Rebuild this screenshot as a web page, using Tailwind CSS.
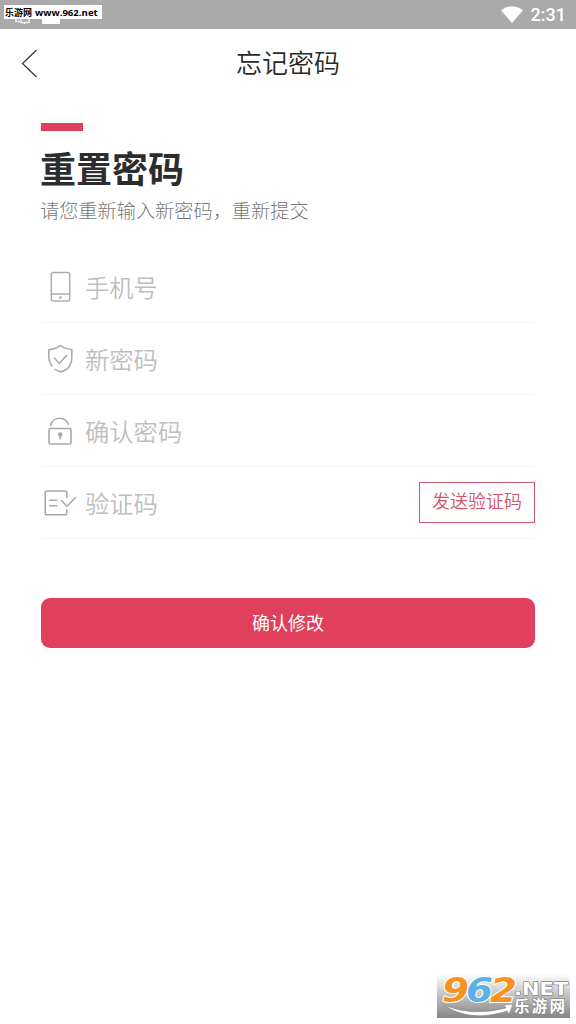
<!DOCTYPE html>
<html lang="zh-CN">
<head>
<meta charset="utf-8">
<title>忘记密码</title>
<script src="https://cdn.jsdelivr.net/npm/@tailwindcss/browser@4"></script>
</head>
<body class="bg-white font-['Noto_Sans_CJK_SC',sans-serif]">
<div class="relative flex h-[1024px] w-[576px] flex-col overflow-hidden bg-white">
  <div class="relative flex h-[29px] shrink-0 items-center justify-end bg-[#aaaaaa] pr-[10px]">
    <svg class="absolute left-0 top-0" width="80" height="29" fill="none" stroke="#fff" stroke-width="1.6">
      <path d="M16 18v3.5h4M21 18v4.5h8V18M23.500 23.2h2" stroke-opacity=".8"/>
      <rect x="42" y="12" width="18" height="12" rx="1" fill="#fff" stroke="none"/>
    </svg>
    <div class="absolute left-1 top-[5px] flex h-[14px] w-[98px] items-center gap-[3px] whitespace-nowrap bg-white pl-px text-[9px] font-bold leading-[14px] text-black"><span class="mt-px">乐游网</span><span class="mt-px font-['Open_Sans'] text-[9.6px]">www.962.net</span></div>
    <svg width="22" height="17" class="mr-2" viewBox="0 0 22 17"><path d="M0 4.2Q11-3.9 22 4.2L11 17z" fill="#fff"/></svg>
    <span class="mt-px font-[Roboto] text-[18px] font-medium leading-none text-white">2:31</span>
  </div>
  <header class="relative flex h-[69px] shrink-0 items-center justify-center">
    <svg class="absolute left-[21px] top-[20px]" width="17" height="29" fill="none" stroke="#303030" stroke-width="1.2"><path d="M15.5 1L1.5 14.5L15.5 28"/></svg>
    <h1 class="mb-[3px] text-[26px] font-[350] leading-[38px] text-[#2a2a2a]">忘记密码</h1>
  </header>
  <main class="flex flex-col px-[41px] pt-[25px]">
    <div class="h-2 w-[42px] bg-[#e0405c]"></div>
    <h2 class="-ml-px mt-[10px] text-[36px] font-bold leading-[52px] text-[#2d2d2d]">重置密码</h2>
    <p class="-ml-px mt-[3px] text-[19.2px] font-light leading-[28px] text-[#777]">请您重新输入新密码，重新提交</p>
    <div class="mt-[27px] flex flex-col text-[24.3px] font-[350] text-[#bebebe]">
      <div class="flex h-[72px] items-center border-b border-[#f6f6f6]">
        <svg class="mr-1 shrink-0" width="40" height="36" fill="none" stroke="#adadad" stroke-width="1.5"><rect x="10.3" y="3.5" width="18.4" height="28.5" rx="2"/><path d="M10 25h19"/><circle cx="19.5" cy="28.500" r="1.3" fill="#adadad" stroke="none"/></svg>
        <span class="mt-px">手机号</span>
      </div>
      <div class="flex h-[72px] items-center border-b border-[#f6f6f6]">
        <svg class="mr-1 shrink-0" width="40" height="36" fill="none" stroke="#adadad" stroke-width="1.6"><path d="M11.3 25.5Q7.8 21 7.8 16V8.7Q15 8 19.3 4.7Q24 8 30.8 8.7V16C30.8 24 28 27.5 23.5 29.5C20 31.5 16.5 30.5 13.5 28"/><path d="M13 16.6l5.2 6L26 14"/></svg>
        <span class="mt-px">新密码</span>
      </div>
      <div class="flex h-[72px] items-center border-b border-[#f6f6f6]">
        <svg class="mr-1 shrink-0" width="40" height="36" fill="none" stroke="#a8a8a8" stroke-width="1.6"><rect x="8" y="15.5" width="22" height="15.500" rx="1.5"/><path d="M9.5 13.2C11 2.8 25 2.8 27.5 11.8"/><circle cx="19.3" cy="21.5" r="2.2" fill="#a8a8a8" stroke="none"/><path d="M19.3 22v4.5"/></svg>
        <span class="mt-px">确认密码</span>
      </div>
      <div class="flex h-[72px] items-center border-b border-[#f6f6f6]">
        <svg class="mr-1 shrink-0" width="40" height="36" fill="none" stroke="#a8a8a8" stroke-width="1.6"><path d="M25.8 13V8Q25.8 6 24 6H6Q4.2 6 4.2 7.8V28Q4.2 29.800 6 29.800H24Q25.8 29.800 25.8 28V24.500M8.3 15.2h8M8.3 20.800h8M20 15.2l6 6L34.8 12.2"/></svg>
        <span class="mt-px">验证码</span>
        <button class="mb-px ml-auto h-[41px] w-[116px] border border-[#cb5a70] pb-[4px] text-[18px] font-[350] leading-none text-[#d4526b]">发送验证码</button>
      </div>
    </div>
    <button class="mt-[59px] h-[50px] rounded-[9px] bg-[#e0405c] pb-[3px] text-[18px] leading-none text-white">确认修改</button>
  </main>
  <div class="absolute bottom-[6px] left-[437px] h-[44px] w-[133px] bg-linear-to-b from-white to-[#858585]">
    <svg width="133" height="44" viewBox="0 0 133 44">
      <path d="M7 31Q35 43 69 34L67 31L76 30L72 40L70 37Q33 49 7 31z" fill="#fff" stroke="#888" stroke-width=".6"/>
      <g font-family="DejaVu Sans" font-weight="bold" font-style="italic" stroke-linejoin="round" paint-order="stroke">
        <g font-size="33" stroke="#fff" stroke-width="2">
          <text x="5" y="28" textLength="27" lengthAdjust="spacingAndGlyphs" fill="#f7931e">9</text>
          <text x="29" y="28" textLength="27" lengthAdjust="spacingAndGlyphs" fill="#5bb0e5">6</text>
          <text x="53" y="28" textLength="27" lengthAdjust="spacingAndGlyphs" fill="#f7931e">2</text>
        </g>
        <text x="77" y="21" font-size="18" font-style="normal" textLength="54" lengthAdjust="spacingAndGlyphs" fill="#fff" stroke="#888" stroke-width="1.4">.NET</text>
      </g>
      <text x="77" y="38" font-family="Noto Sans CJK SC" font-size="15.500" font-weight="bold" textLength="51" fill="#fff" stroke="#888" stroke-width="1.4" paint-order="stroke">乐游网</text>
    </svg>
  </div>
</div>
</body>
</html>
